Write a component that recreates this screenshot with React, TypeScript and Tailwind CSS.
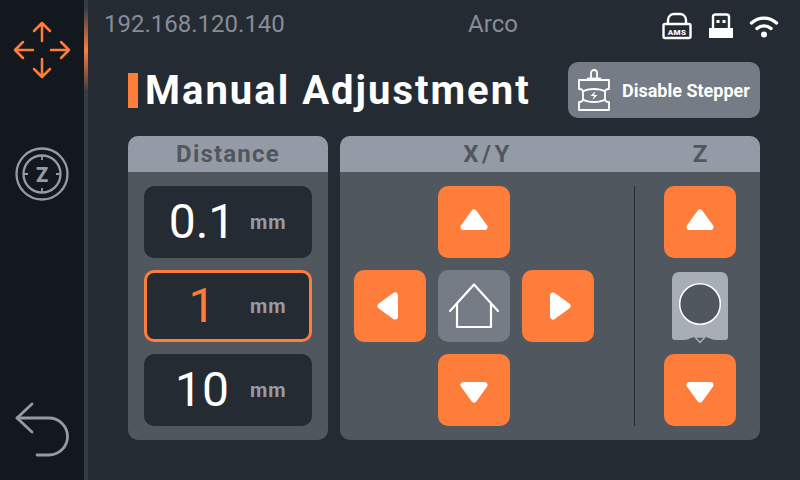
import React from "react";

const font = { fontFamily: "Roboto, sans-serif" };

function Triangle({ className }: { className: string }) {
  return (
    <svg width="72" height="72" viewBox="0 0 72 72" className={className}>
      <path d="M36 26.500 L46.500 41 H25.500 Z" fill="#fff" stroke="#fff" strokeWidth="6" strokeLinejoin="round" />
    </svg>
  );
}

function ArrowButton({ rot }: { rot: string }) {
  return (
    <div className="w-[72px] h-[72px] rounded-[10px] bg-[#ff7d3b]">
      <Triangle className={rot} />
    </div>
  );
}

function MoveIcon() {
  return (
    <svg width="84" height="100" viewBox="0 0 84 100" fill="none" stroke="#ff7d3b" strokeWidth="2.500" strokeLinecap="round" strokeLinejoin="round">
      <path d="M42 23V41M34 31L42 23L50 31" />
      <path d="M42 59V77M34 69L42 77L50 69" />
      <path d="M15 50H33M23 42L15 50L23 58" />
      <path d="M51 50H69M61 42L69 50L61 58" />
    </svg>
  );
}

function ZIcon() {
  return (
    <svg width="84" height="84" viewBox="0 0 84 84" fill="none" stroke="#959ba6" strokeWidth="2.300">
      <circle cx="42" cy="42" r="25.500" />
      <circle cx="42" cy="42" r="18.500" />
      <path d="M42 23V28M42 56V61M23 42H28M56 42H61" strokeWidth="1.800" />
      <text x="42" y="49.500" textAnchor="middle" fontFamily="Roboto, sans-serif" fontWeight="900" fontSize="20" fill="#959ba6" stroke="none">Z</text>
    </svg>
  );
}

function BackIcon() {
  return (
    <svg width="84" height="64" viewBox="0 0 84 64" fill="none" stroke="#959ba6" strokeWidth="2.800" strokeLinecap="round" strokeLinejoin="round">
      <path d="M32 4L17 18L32 32" />
      <path d="M17 18H49A18 18 0 0 1 49 55H37" />
    </svg>
  );
}

function AmsIcon() {
  return (
    <svg width="32" height="28" viewBox="0 0 32 28" fill="none">
      <path d="M7 12V8A6 6 0 0 1 13 2H19A6 6 0 0 1 25 8V12" stroke="#fff" strokeWidth="2.400" />
      <rect x="2.500" y="12" width="27" height="14" rx="1.500" stroke="#fff" strokeWidth="2.400" />
      <text x="16" y="22.700" textAnchor="middle" fontFamily="Roboto, sans-serif" fontWeight="900" fontSize="8" fill="#fff" letterSpacing="0.400">AMS</text>
    </svg>
  );
}

function UsbIcon() {
  return (
    <svg width="24" height="26" viewBox="0 0 24 26" fill="none">
      <path d="M4 15V4A2.500 2.500 0 0 1 6.500 1.500H17.500A2.500 2.500 0 0 1 20 4V15" stroke="#fff" strokeWidth="2.400" />
      <rect x="0" y="15" width="24" height="10" fill="#fff" />
      <rect x="7.500" y="7" width="3" height="3" fill="#fff" />
      <rect x="13.500" y="7" width="3" height="3" fill="#fff" />
    </svg>
  );
}

function WifiIcon() {
  return (
    <svg width="30" height="24" viewBox="0 0 30 24" fill="none" stroke="#fff" strokeWidth="3.400" strokeLinecap="round">
      <path d="M2.500 9C10 2.500 20 2.500 27.500 9" />
      <path d="M8 14.500C12 11 18 11 22 14.500" />
      <circle cx="15" cy="20.500" r="3" fill="#fff" stroke="none" />
    </svg>
  );
}

function StepperIcon() {
  return (
    <svg width="32" height="42" viewBox="0 0 32 42" fill="none" stroke="#fff" strokeWidth="1.800" strokeLinejoin="round">
      <path d="M13 9V4A3 3 0 0 1 19 4V9" />
      <path d="M9 9.500H23" />
      <path d="M1 11H31V20C28 20 27 21 27 23V30C27 32 28 33 31 33V41H1V33C4 33 5 32 5 30V23C5 21 4 20 1 20Z" />
      <path d="M5 22.500C9 20 12 20 16 20S23 20 27 22.500" />
      <path d="M5 30.500C9 33 12 33 16 33S23 33 27 30.500" />
      <path d="M17.500 22L12.500 27H16L14.500 31L19.500 26H16Z" fill="#fff" stroke="none" />
    </svg>
  );
}

function HomeIcon() {
  return (
    <svg width="72" height="72" viewBox="0 0 72 72" fill="none" stroke="#fff" strokeWidth="2.200" strokeLinecap="round" strokeLinejoin="round">
      <path d="M12 41L36 14.500L60 41" />
      <path d="M19 34V57H53V34" />
    </svg>
  );
}

function ZMarker() {
  return (
    <svg width="56" height="68" viewBox="0 0 56 68" className="overflow-visible">
      <path d="M7 0H49A7 7 0 0 1 56 7V65A3 3 0 0 1 53 68H44C39 68 37 65 33 65H23C19 65 17 68 12 68H3A3 3 0 0 1 0 65V7A7 7 0 0 1 7 0Z" fill="#a8aeb6" />
      <circle cx="28" cy="32" r="20.300" fill="#50575f" stroke="#fff" strokeWidth="1.500" />
      <path d="M23 65L28 70.500L33 65Z" fill="#50575f" stroke="#a8aeb6" strokeWidth="1.500" strokeLinejoin="round" />
    </svg>
  );
}

function Distance({ value, active }: { value: string; active?: boolean }) {
  return (
    <div className={`w-[168px] h-[72px] rounded-[10px] bg-[#252b33] flex items-center ${active ? "border-[3px] border-[#ff7d3b]" : ""}`}>
      <div className={`text-center text-[48px] font-normal leading-none ${active ? "w-[103px] pl-[7px] text-[#ff7d3b]" : "w-[106px] pl-[10px] text-white"}`}>{value}</div>
      <div className="text-[20px] font-bold tracking-[1px] text-[#959ba6]">mm</div>
    </div>
  );
}

export default function App() {
  return (
    <div className="w-[800px] h-[480px] flex bg-[#252b33] overflow-hidden" style={font}>
      <aside className="w-[84px] h-full bg-[#13171e] flex flex-col items-center">
        <MoveIcon />
        <div className="mt-[32px]"><ZIcon /></div>
        <div className="mt-auto mb-[16px]"><BackIcon /></div>
      </aside>
      <div className="w-[4px] h-full bg-[#363c44] relative">
        <div className="absolute left-0 top-[8px] w-full h-[84px] bg-gradient-to-b from-transparent via-[#ff7d3b] to-transparent" />
      </div>
      <main className="flex-1 flex flex-col">
        <header className="h-[48px] flex items-center pl-[16px] pr-[21px] relative">
          <span className="text-[24px] text-[#868d97]">192.168.120.140</span>
          <span className="absolute left-[405px] text-[24px] text-[#868d97] w-[0px] flex justify-center">Arco</span>
          <div className="ml-auto mt-[4px] flex items-center gap-[16px]">
            <AmsIcon />
            <UsbIcon />
            <WifiIcon />
          </div>
        </header>
        <div className="mx-[40px] mt-[14px] h-[56px] flex items-center justify-between">
          <div className="flex items-center gap-[7px]">
            <div className="w-[10px] h-[35px] bg-[#ff7d3b]" />
            <h1 className="pt-[2px] text-[40px] font-bold text-white tracking-[2px] leading-none">Manual Adjustment</h1>
          </div>
          <div className="w-[192px] h-[56px] rounded-[10px] bg-[#757c85] flex items-center pl-[10px]">
            <StepperIcon />
            <span className="ml-[12px] text-[18px] font-bold text-white whitespace-nowrap">Disable Stepper</span>
          </div>
        </div>
        <div className="mx-[40px] mt-[18px] flex gap-[12px]">
          <section className="w-[200px] h-[304px] rounded-[10px] overflow-hidden bg-[#50575f]">
            <div className="h-[36px] bg-[#959ba6] flex items-center justify-center text-[24px] font-bold tracking-[1.200px] text-[#50575f]">Distance</div>
            <div className="flex flex-col items-center gap-[12px] pt-[14px]">
              <Distance value="0.1" />
              <Distance value="1" active />
              <Distance value="10" />
            </div>
          </section>
          <section className="w-[420px] h-[304px] rounded-[10px] overflow-hidden bg-[#50575f]">
            <div className="h-[36px] bg-[#959ba6] flex items-center text-[24px] font-bold text-[#50575f]">
              <span className="w-[296px] text-center tracking-[3.500px]">X/Y</span>
              <span className="ml-[28px] w-[72px] text-center">Z</span>
            </div>
            <div className="flex pt-[14px] pl-[14px]">
              <div className="grid grid-cols-[72px_72px_72px] grid-rows-[72px_72px_72px] gap-[12px]">
                <div />
                <ArrowButton rot="rotate-0" />
                <div />
                <ArrowButton rot="-rotate-90" />
                <div className="w-[72px] h-[72px] rounded-[10px] bg-[#757c85]"><HomeIcon /></div>
                <ArrowButton rot="rotate-90" />
                <div />
                <ArrowButton rot="rotate-180" />
                <div />
              </div>
              <div className="ml-[40px] w-px h-[240px] bg-[#252b33]" />
              <div className="ml-[29px] h-[240px] flex flex-col items-center justify-between">
                <ArrowButton rot="rotate-0" />
                <ZMarker />
                <ArrowButton rot="rotate-180" />
              </div>
            </div>
          </section>
        </div>
      </main>
    </div>
  );
}
